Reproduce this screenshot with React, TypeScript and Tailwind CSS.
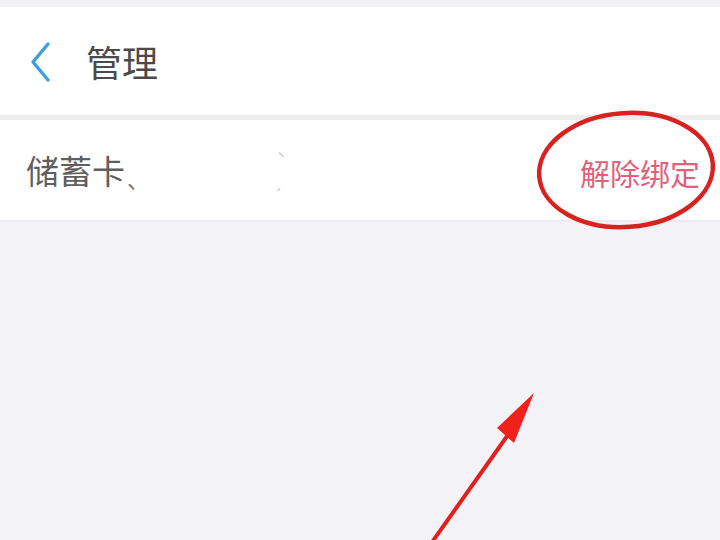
import React from "react";

const cjk = { fontFamily: '"Noto Sans CJK SC", "Noto Sans", sans-serif' };

export default function App() {
  return (
    <div className="relative h-[540px] w-[720px] overflow-hidden bg-[#f3f3f7]" style={cjk}>
      <div className="h-[7px] bg-[#f2f2f4]" />
      <header className="flex h-[108px] items-center bg-white pl-[28px]">
        <svg width="24" height="44" viewBox="0 0 24 44" className="mt-[2px]">
          <path d="M20 4 L5 22 L20 40" fill="none" stroke="#3d9fe0" strokeWidth="3.5" strokeLinecap="round" strokeLinejoin="round" />
        </svg>
        <h1 className="ml-[34px] text-[36px] leading-none text-[#4a4a4a]">管理</h1>
      </header>
      <div className="h-[5px] bg-[#ededf0]" />
      <div className="flex h-[102px] items-center justify-between border-b-2 border-[#ececef] bg-white pl-[26px] pr-[20px]">
        <div className="flex items-center">
          <span className="text-[33px] leading-none text-[#5f5f5f]">储蓄卡</span>
          <span className="ml-[2px] mt-[16px] text-[22px] leading-none text-[#777]">、</span>
          <span className="ml-[128px] flex flex-col gap-[10px] text-[14px] leading-[14px] text-[#bbb]">
            <span>ˋ</span>
            <span>ˏ</span>
          </span>
        </div>
        <span className="mt-[4px] text-[30px] leading-none text-[#e2607a]">解除绑定</span>
      </div>
      <svg className="pointer-events-none absolute left-0 top-0" width="720" height="540" viewBox="0 0 720 540">
        <ellipse cx="626" cy="170" rx="87" ry="57" transform="rotate(-4 626 170)" fill="none" stroke="#d8221f" strokeWidth="4.5" />
        <line x1="430" y1="545" x2="510" y2="432" stroke="#e3201c" strokeWidth="4" strokeLinecap="round" />
        <polygon points="534,393 497,428 514,443" fill="#f0201a" />
      </svg>
    </div>
  );
}
